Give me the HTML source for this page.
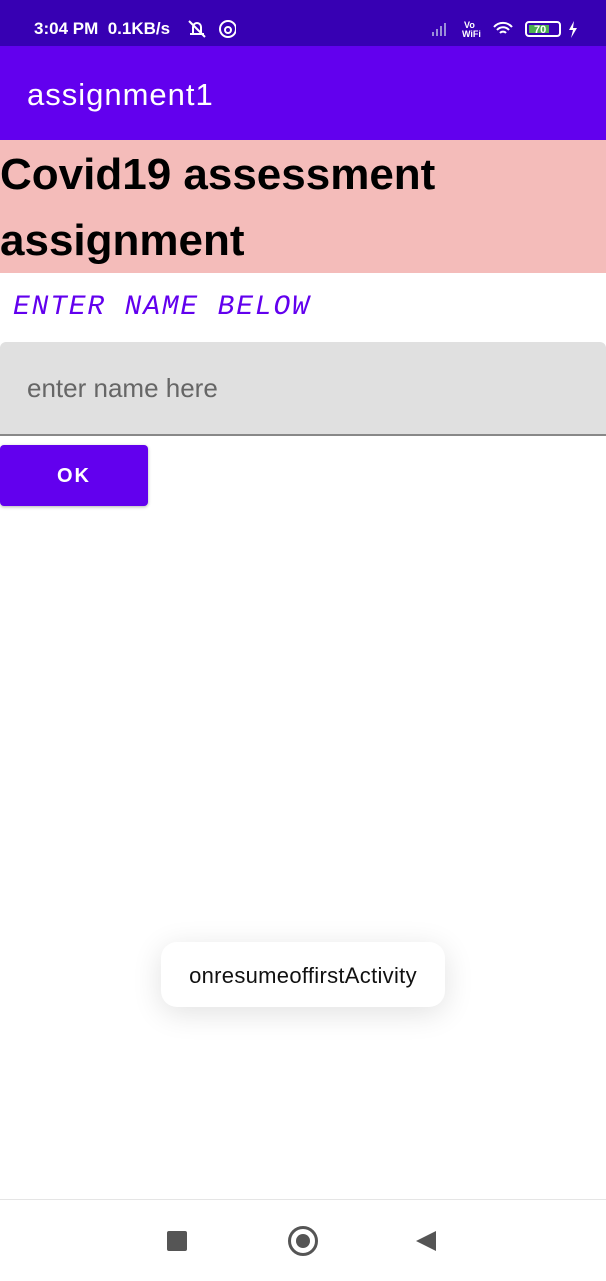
<!DOCTYPE html>
<html><head><meta charset="utf-8"><style>
body{margin:0;width:606px;height:1280px;position:relative;background:#fff;font-family:"Liberation Sans",sans-serif;overflow:hidden}
.sb{position:absolute;top:0;left:0;width:606px;height:46px;background:#3700b3;color:#fff;font-weight:bold;font-size:17px}
.ab{position:absolute;top:46px;left:0;width:606px;height:94px;background:#6200ee;color:#fff;font-size:31px;letter-spacing:1px}
.title{position:absolute;top:140px;left:0;width:606px;height:133px;background:#f4bcba;font-weight:bold;font-size:44px;line-height:66px;color:#000}
</style></head><body>
<div class="sb">
<span style="position:absolute;left:34px;top:19px">3:04 PM&nbsp; 0.1KB/s</span>
<svg style="position:absolute;left:186px;top:18px" width="50" height="22" viewBox="0 0 50 22" fill="none" stroke="#fff" stroke-width="2"><path d="M4 16h14M7 16V9a4 4 0 018 0v7M3 3l16 16"/><circle cx="42" cy="11" r="8"/><circle cx="42" cy="12" r="3"/></svg>
<svg style="position:absolute;left:430px;top:18px" width="150" height="22" viewBox="0 0 150 22"><g fill="#9a8fd8"><rect x="2" y="14" width="2" height="4"/><rect x="6" y="11" width="2" height="7"/><rect x="10" y="8" width="2" height="10"/><rect x="14" y="5" width="2" height="13"/></g><text x="34" y="10" font-size="9" fill="#fff">Vo</text><text x="32" y="19" font-size="9" fill="#fff">WiFi</text><path d="M64 9a12 12 0 0118 0M67 12a8 8 0 0112 0M70 15a4 4 0 016 0" stroke="#fff" stroke-width="2" fill="none"/><rect x="96" y="4" width="34" height="14" rx="3" stroke="#fff" stroke-width="2" fill="none"/><rect x="99" y="7" width="20" height="8" fill="#4caf50"/><text x="104" y="15" font-size="11" fill="#fff">70</text><path d="M144 3l-5 9h4l-2 8 6-10h-4z" fill="#fff"/></svg>
</div>
<div class="ab"><span style="position:absolute;left:27px;top:31px">assignment1</span></div>
<div class="title"><div style="padding-top:2px">Covid19 assessment<br>assignment</div></div>
<div style="position:absolute;left:13px;top:292px;font-family:'Liberation Mono',monospace;font-style:italic;font-size:28px;color:#6200ee;letter-spacing:1.8px">ENTER NAME BELOW</div>
<div style="position:absolute;left:0;top:342px;width:606px;height:92px;background:#e0e0e0;border-radius:6px 6px 0 0;border-bottom:2px solid #888"><span style="position:absolute;left:27px;top:31px;font-size:26px;color:#666">enter name here</span></div>
<div style="position:absolute;left:0;top:445px;width:148px;height:61px;background:#6200ee;border-radius:4px;color:#fff;font-weight:bold;font-size:20px;text-align:center;line-height:63px;letter-spacing:2px;box-shadow:0 1px 3px rgba(0,0,0,.3)">OK</div>
<div style="position:absolute;left:161px;top:942px;width:284px;height:65px;background:#fff;border-radius:16px;box-shadow:0 6px 30px rgba(0,0,0,.12);text-align:center;line-height:67px;font-size:22px;letter-spacing:0.3px;color:#111">onresumeoffirstActivity</div>
<div style="position:absolute;left:0;top:1199px;width:606px;height:81px;background:#fff;border-top:1px solid #e5e5e5">
<div style="position:absolute;left:167px;top:31px;width:20px;height:20px;background:#555;border-radius:2px"></div>
<div style="position:absolute;left:288px;top:26px;width:24px;height:24px;border:3px solid #555;border-radius:50%"></div>
<div style="position:absolute;left:296px;top:34px;width:14px;height:14px;background:#555;border-radius:50%"></div>
<svg style="position:absolute;left:414px;top:29px" width="24" height="24"><path d="M22 2L2 12l20 10z" fill="#555"/></svg>
</div>
</body></html>
